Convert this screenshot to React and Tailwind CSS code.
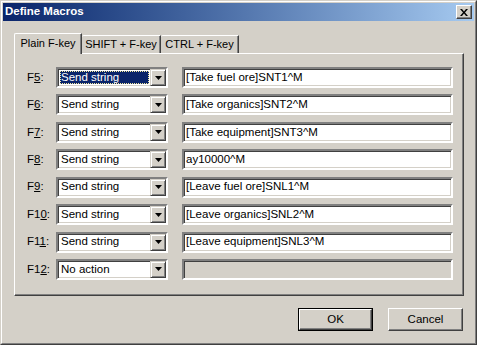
import React from "react";

const rows = [
  { key: "F", ul: "5", action: "Send string", value: "[Take fuel ore]SNT1^M" },
  { key: "F", ul: "6", action: "Send string", value: "[Take organics]SNT2^M" },
  { key: "F", ul: "7", action: "Send string", value: "[Take equipment]SNT3^M" },
  { key: "F", ul: "8", action: "Send string", value: "ay10000^M" },
  { key: "F", ul: "9", action: "Send string", value: "[Leave fuel ore]SNL1^M" },
  { key: "F1", ul: "0", action: "Send string", value: "[Leave organics]SNL2^M" },
  { key: "F1", ul: "1", action: "Send string", value: "[Leave equipment]SNL3^M" },
  { key: "F1", ul: "2", action: "No action", value: "", disabled: true },
];

const Arrow = () => (
  <svg width="7" height="4" viewBox="0 0 7 4" className="block">
    <path d="M0 0h7L3.5 4z" fill="#000" />
  </svg>
);

const Combo = ({ text, focused }) => (
  <div className="w-[112px] h-[21px] border-2 border-t-[#808080] border-l-[#808080] border-b-white border-r-white">
    <div className="h-full w-full flex bg-white shadow-[inset_1px_1px_0_#404040,inset_-1px_-1px_0_#d4d0c8]">
      <div className="flex-1 flex p-[2px] pr-[1px]">
        {focused ? (
          <div className="flex-1 flex items-center bg-[#0a246a] text-white pl-[1px] outline-1 outline-dotted outline-[#f2e9a0] -outline-offset-1">
            {text}
          </div>
        ) : (
          <div className="flex-1 flex items-center pl-[1px]">{text}</div>
        )}
      </div>
      <div className="w-[16px] h-[17px] bg-[#d4d0c8] border border-t-[#d4d0c8] border-l-[#d4d0c8] border-b-[#404040] border-r-[#404040] shadow-[inset_1px_1px_0_#fff,inset_-1px_-1px_0_#808080] flex items-center justify-center">
        <Arrow />
      </div>
    </div>
  </div>
);

const Field = ({ value, disabled }) => (
  <div className="w-[271px] h-[21px] border-2 border-t-[#808080] border-l-[#808080] border-b-white border-r-white">
    <div
      className={
        "h-full w-full flex items-center pl-[2px] shadow-[inset_1px_1px_0_#404040,inset_-1px_-1px_0_#d4d0c8] " +
        (disabled ? "bg-[#d4d0c8]" : "bg-white")
      }
    >
      {value}
    </div>
  </div>
);

const Button = ({ children, isDefault }) => (
  <div className={"w-[75px] h-[23px] " + (isDefault ? "border border-black" : "")}>
    <div className="h-full w-full bg-[#d4d0c8] border border-t-white border-l-white border-b-[#404040] border-r-[#404040] shadow-[inset_-1px_-1px_0_#808080] flex items-center justify-center">
      {children}
    </div>
  </div>
);

export default function App() {
  return (
    <div
      className="w-[477px] h-[345px] bg-[#d4d0c8] border border-t-[#d4d0c8] border-l-[#d4d0c8] border-b-[#404040] border-r-[#404040] text-[11.5px] text-black leading-none"
      style={{ fontFamily: '"Liberation Sans", Arial, sans-serif' }}
    >
      <div className="h-full w-full border border-t-white border-l-white border-b-[#808080] border-r-[#808080] p-[1px] flex flex-col">
        {/* title bar */}
        <div className="h-[18px] flex items-center justify-between pl-[2px] pr-[2px] bg-gradient-to-r from-[#0a246a] to-[#a6caf0]">
          <span className="text-white font-bold text-[11.5px]">Define Macros</span>
          <div className="w-[16px] h-[14px] bg-[#d4d0c8] border border-t-white border-l-white border-b-[#404040] border-r-[#404040] shadow-[inset_-1px_-1px_0_#808080] flex items-center justify-center">
            <svg width="8" height="7" viewBox="0 0 8 7" className="block">
              <path d="M0 0h2l2 2.5L6 0h2L5 3.5 8 7H6L4 4.5 2 7H0l3-3.5z" fill="#000" />
            </svg>
          </div>
        </div>

        {/* body */}
        <div className="pl-[11px] pt-[12px] flex flex-col">
          <div className="flex items-end h-[20px] text-[11px] whitespace-nowrap">
            <div className="relative z-10 w-[68px] h-[21px] -mb-[1px] bg-[#d4d0c8] border-l border-t border-white border-r border-r-[#404040] shadow-[inset_-1px_0_0_#808080] rounded-tl-[2px] flex items-start justify-center pt-[4px]">
              Plain F-key
            </div>
            <div className="w-[79px] h-[18px] border-t border-t-white border-r border-r-[#404040] shadow-[inset_-1px_0_0_#808080] rounded-tl-[2px] flex items-start justify-center pt-[3px]">
              SHIFT + F-key
            </div>
            <div className="w-[78px] h-[18px] border-t border-t-white border-r border-r-[#404040] shadow-[inset_-1px_0_0_#808080] rounded-tl-[2px] flex items-start justify-center pt-[3px]">
              CTRL + F-key
            </div>
          </div>

          {/* panel */}
          <div className="w-[450px] h-[243px] border border-t-white border-l-white border-b-[#404040] border-r-[#404040] shadow-[inset_-1px_-1px_0_#808080] pl-[12px] pt-[13px] flex flex-col gap-[6.43px]">
            {rows.map((r, i) => (
              <div key={i} className="flex items-center h-[21px]">
                <div className="w-[29px]">
                  {r.key}
                  <span className="underline underline-offset-1">{r.ul}</span>:
                </div>
                <Combo text={r.action} focused={i === 0} />
                <div className="w-[14px]" />
                <Field value={r.value} disabled={r.disabled} />
              </div>
            ))}
          </div>

          {/* buttons */}
          <div className="flex justify-end gap-[15px] mt-[12px] w-[450px] pr-[1px]">
            <Button isDefault>OK</Button>
            <Button>Cancel</Button>
          </div>
        </div>
      </div>
    </div>
  );
}
